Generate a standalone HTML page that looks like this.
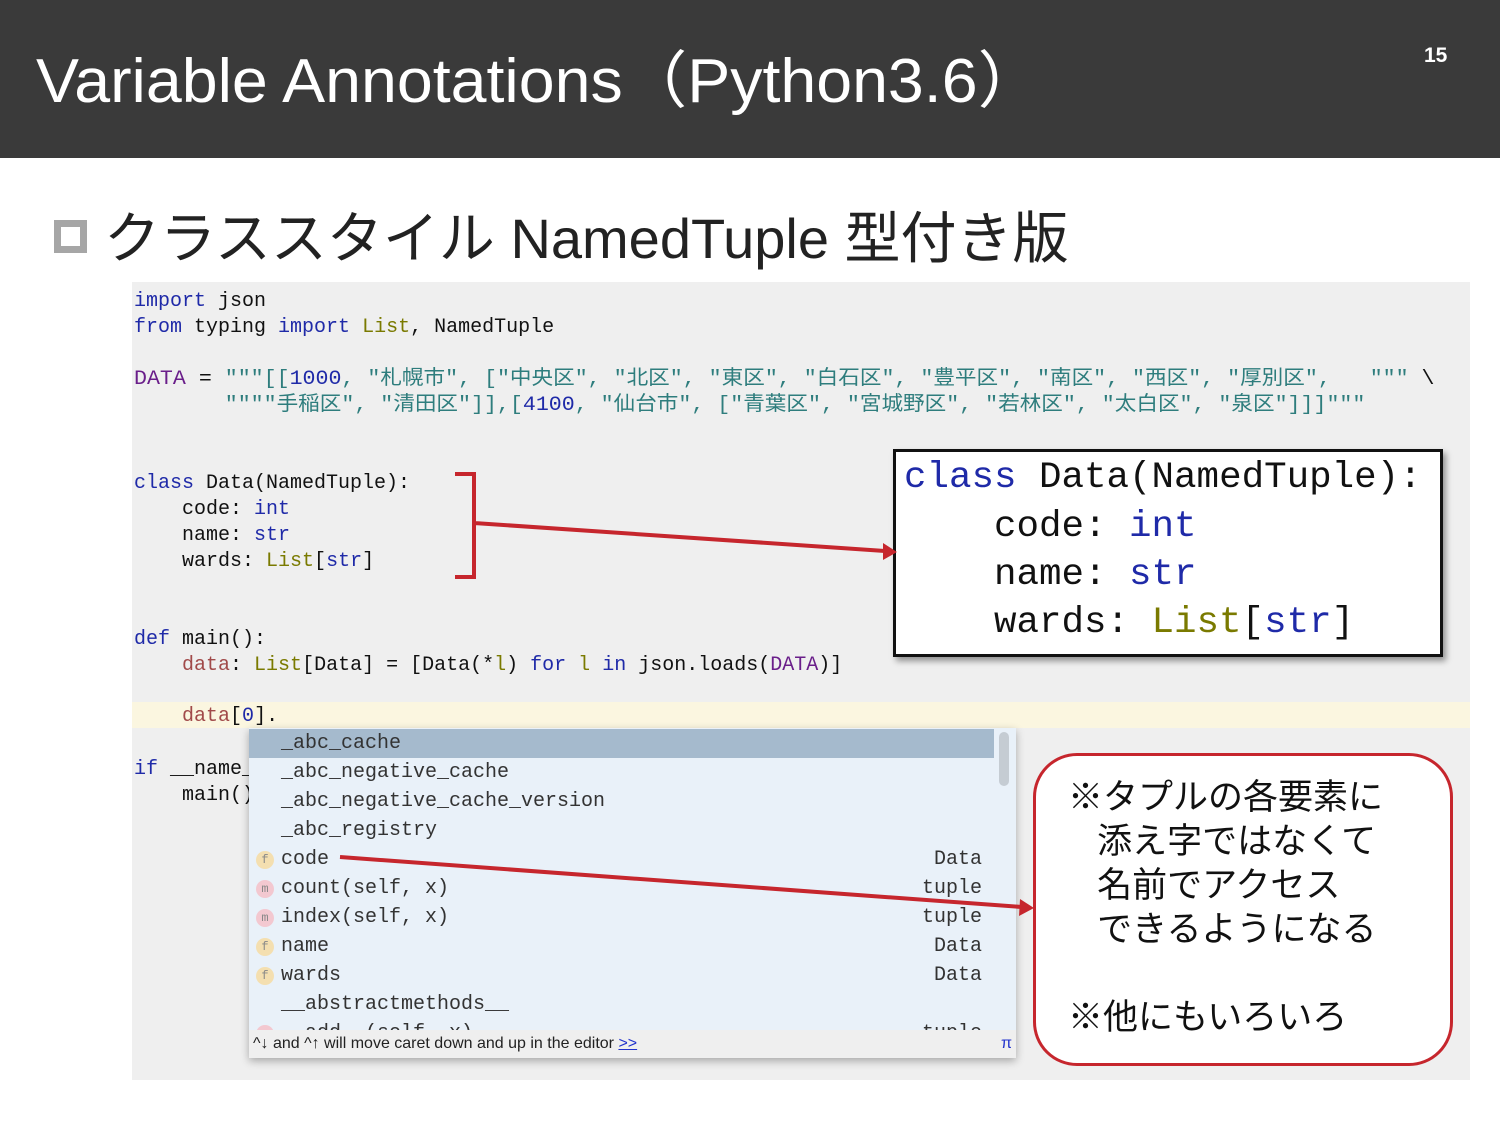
<!DOCTYPE html>
<html><head><meta charset="utf-8"><style>
*{margin:0;padding:0;box-sizing:border-box}
body{width:1500px;height:1125px;background:#fff;position:relative;overflow:hidden;font-family:"Liberation Sans","Noto Sans CJK JP",sans-serif}
.hdr{position:absolute;left:0;top:0;width:1500px;height:158px;background:#3a3a3a}
.title{position:absolute;left:36px;top:30px;color:#fff;font-size:62px;white-space:nowrap;transform-origin:0 0;transform:scaleX(1.04)}
.pg{position:absolute;left:1424px;top:44px;color:#fff;font-size:21px;font-weight:bold}
.bul{position:absolute;left:54px;top:220px;width:33px;height:33px;border:7px solid #a6a6a6;background:#fff}
.sub{position:absolute;left:104px;top:194px;font-size:56px;color:#222;white-space:nowrap;transform-origin:0 0;transform:scaleX(1.0)}
.ed{position:absolute;left:132px;top:282px;width:1338px;height:798px;background:#efefef}
.cl{position:absolute;left:134px;font-family:"Liberation Mono","Noto Sans CJK JP",monospace;font-size:20px;line-height:26px;white-space:pre;color:#111;transform-origin:0 0}
.k{color:#1f2aa8}.s{color:#2e7d7d}.p{color:#6a1e8a}.v{color:#a14a4a}.o{color:#7a7a00}.n{color:#1f2aa8}
.curl{position:absolute;left:132px;top:702px;width:1338px;height:26px;background:#fbf6e0}
.big{position:absolute;left:893px;top:449px;width:550px;height:208px;background:#fff;border:3px solid #111;box-shadow:3px 4px 6px rgba(0,0,0,.4)}
.bl{position:absolute;font-family:"Liberation Mono",monospace;font-size:37.5px;white-space:pre;color:#111;line-height:48px}
.pop{position:absolute;left:249px;top:728px;width:767px;height:330px;background:#e9f1f9;box-shadow:0 3px 8px rgba(0,0,0,.3);overflow:hidden}
.row{position:absolute;left:0;width:745px;height:29px;font-family:"Liberation Mono",monospace;font-size:20px;line-height:29px;color:#333;white-space:pre}
.row .nm{position:absolute;left:32px}
.row .ty{position:absolute;right:12px}
.ic{position:absolute;left:7px;top:6px;width:18px;height:18px;border-radius:9px;font-size:12px;line-height:18px;text-align:center;color:#888}
.f{background:#f4dfb0}.m{background:#f3c8d0}
.foot{position:absolute;left:0;top:302px;width:767px;height:28px;background:#efefef;font-size:16px;line-height:28px;color:#222;padding-left:4px}
.call{position:absolute;left:1033px;top:753px;width:420px;height:313px;border:3px solid #c6262d;border-radius:44px;background:#fff}
.ct{position:absolute;font-size:35px;color:#111;white-space:pre;line-height:44px}
</style></head><body>
<div class="hdr"></div>
<div class="title">Variable Annotations（Python3.6）</div>
<div class="pg">15</div>
<div class="bul"></div>
<div class="sub">クラススタイル NamedTuple 型付き版</div>
<div class="ed"></div>
<div class="curl"></div>
<div class="cl" style="top:289px"><span class="k">import</span> json</div>
<div class="cl" style="top:315px"><span class="k">from</span> typing <span class="k">import</span> <span class="o">List</span>, NamedTuple</div>
<div class="cl" style="top:367px;transform:scaleX(1.08)"><span class="p">DATA</span> = <span class="s">"""[[<span class="n">1000</span>, "札幌市", ["中央区", "北区", "東区", "白石区", "豊平区", "南区", "西区", "厚別区",</span>   <span class="s">"""</span> \</div>
<div class="cl" style="top:393px;transform:scaleX(1.08)"><span class="s">       """"手稲区", "清田区"]],[<span class="n">4100</span>, "仙台市", ["青葉区", "宮城野区", "若林区", "太白区", "泉区"]]]"""</span></div>
<div class="cl" style="top:471px"><span class="k">class</span> Data(NamedTuple):</div>
<div class="cl" style="top:497px">    code: <span class="k">int</span></div>
<div class="cl" style="top:523px">    name: <span class="k">str</span></div>
<div class="cl" style="top:549px">    wards: <span class="o">List</span>[<span class="k">str</span>]</div>
<div class="cl" style="top:627px"><span class="k">def</span> main():</div>
<div class="cl" style="top:653px">    <span class="v">data</span>: <span class="o">List</span>[Data] = [Data(*<span class="o">l</span>) <span class="k">for</span> <span class="o">l</span> <span class="k">in</span> json.loads(<span class="p">DATA</span>)]</div>
<div class="cl" style="top:704px">    <span class="v">data</span>[<span class="n">0</span>].</div>
<div class="cl" style="top:757px"><span class="k">if</span> __name__</div>
<div class="cl" style="top:783px">    main()</div>
<div class="big">
<div class="bl" style="left:8px;top:2px"><span class="k">class</span> Data(NamedTuple):</div>
<div class="bl" style="left:98px;top:51px">code: <span class="k">int</span></div>
<div class="bl" style="left:98px;top:99px">name: <span class="k">str</span></div>
<div class="bl" style="left:98px;top:147px">wards: <span class="o">List</span>[<span class="k">str</span>]</div>
</div>
<div class="pop">
<div class="row" style="top:1px;background:#a5bacd"><span class="nm">_abc_cache</span></div>
<div class="row" style="top:30px"><span class="nm">_abc_negative_cache</span></div>
<div class="row" style="top:59px"><span class="nm">_abc_negative_cache_version</span></div>
<div class="row" style="top:88px"><span class="nm">_abc_registry</span></div>
<div class="row" style="top:117px"><span class="ic f">f</span><span class="nm">code</span><span class="ty">Data</span></div>
<div class="row" style="top:146px"><span class="ic m">m</span><span class="nm">count(self, x)</span><span class="ty">tuple</span></div>
<div class="row" style="top:175px"><span class="ic m">m</span><span class="nm">index(self, x)</span><span class="ty">tuple</span></div>
<div class="row" style="top:204px"><span class="ic f">f</span><span class="nm">name</span><span class="ty">Data</span></div>
<div class="row" style="top:233px"><span class="ic f">f</span><span class="nm">wards</span><span class="ty">Data</span></div>
<div class="row" style="top:262px"><span class="nm">__abstractmethods__</span></div>
<div class="row" style="top:291px"><span class="ic m">m</span><span class="nm">__add__(self, x)</span><span class="ty">tuple</span></div>
<div style="position:absolute;left:750px;top:4px;width:10px;height:54px;border-radius:5px;background:#c5ccd3"></div>
<div class="foot">^↓ and ^↑ will move caret down and up in the editor <span style="color:#2233cc;text-decoration:underline">&gt;&gt;</span><span style="position:absolute;right:4px;color:#2233cc">π</span></div>
</div>
<div class="call">
<div class="ct" style="left:32px;top:20px">※タプルの各要素に
   添え字ではなくて
   名前でアクセス
   できるようになる

※他にもいろいろ</div>
</div>
<svg width="1500" height="1125" style="position:absolute;left:0;top:0" viewBox="0 0 1500 1125">
<path d="M455 474 H474 V577 H455 M474 523 L885 551" fill="none" stroke="#c6262d" stroke-width="4"/>
<path d="M883 543 L897 552 L883 560 Z" fill="#c6262d"/>
<path d="M340 857 L1022 907" fill="none" stroke="#c6262d" stroke-width="4"/>
<path d="M1020 899 L1034 908 L1019 916 Z" fill="#c6262d"/>
</svg>
</body></html>
